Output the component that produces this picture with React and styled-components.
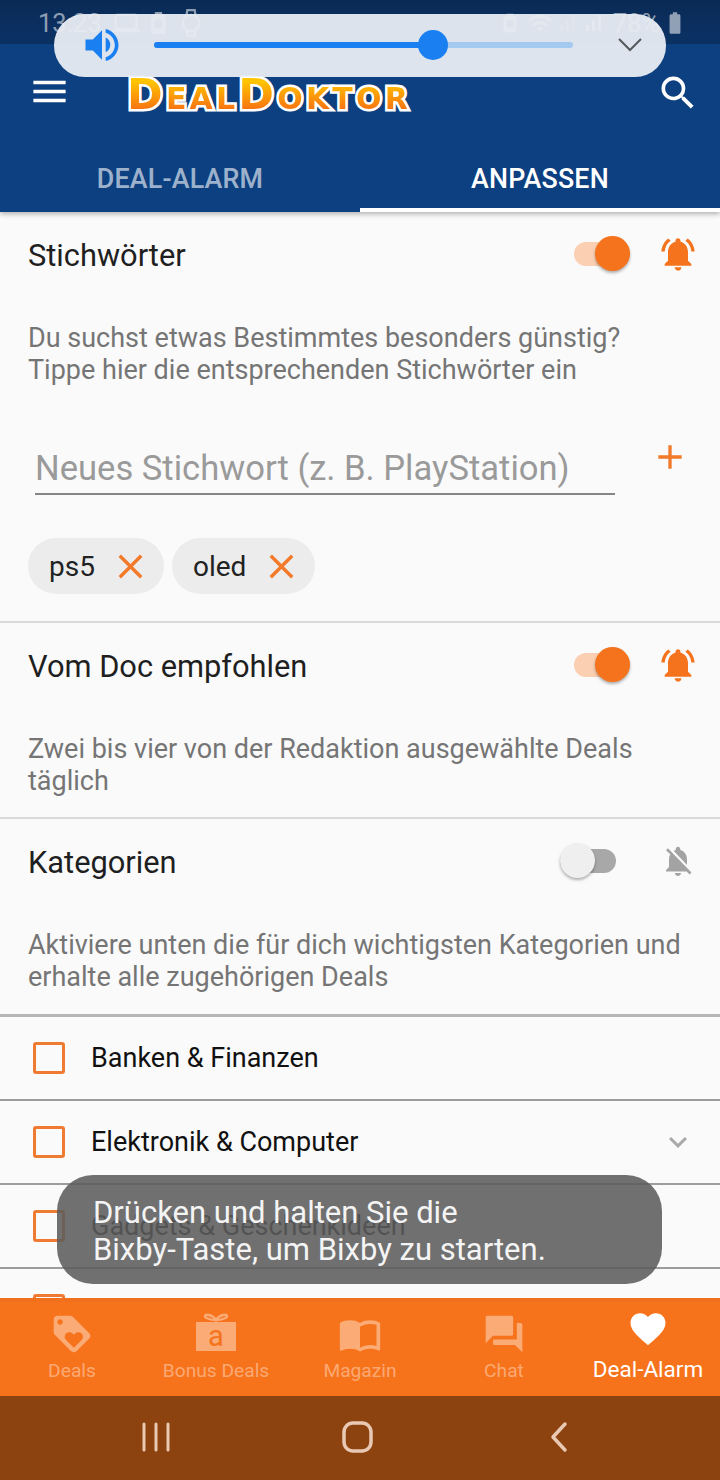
import React from "react";
import styled, { createGlobalStyle } from "styled-components";
import {
  MdMenu, MdSearch, MdAdd, MdClose, MdExpandMore, MdFavorite, MdForum, MdImportContacts,
  MdLoyalty, MdNotificationsActive, MdNotificationsOff, MdVolumeUp, MdLaptop, MdOutlineWatch,
  MdWifi, MdSignalCellularAlt, MdBatteryFull,
} from "react-icons/md";

const Global = createGlobalStyle`
  html, body { margin: 0; padding: 0; background: #fafafa; }
  body { font-family: Roboto, "Noto Sans", sans-serif; }
  * { box-sizing: border-box; }
`;

const Screen = styled.div`
  position: relative; width: 720px; height: 1480px; overflow: hidden;
  display: flex; flex-direction: column; background: #fafafa;
`;

const StatusBar = styled.div`
  height: 44px; flex: none; padding: 9px 32px 0 38px;
  display: flex; align-items: flex-start; justify-content: space-between;
  background: linear-gradient(#0a2a55, #0b3265);
  color: rgba(255,255,255,.55); font-size: 25.5px; line-height: 28px;
`;
const StatusGroup = styled.div`display: flex; align-items: center; gap: ${p => p.$gap}px; svg { flex: none; }`;

const AppBar = styled.header`
  height: 168px; flex: none; background: #0d4080; display: flex; flex-direction: column;
  box-shadow: 0 2px 5px rgba(0,0,0,.3); position: relative; z-index: 1;
`;
const TopRow = styled.div`
  height: 106px; display: flex; align-items: flex-start; padding: 26px 20px 0 28px; color: #fff;
  justify-content: space-between;
`;
const MenuGroup = styled.div`display: flex; align-items: flex-start; gap: 56px;`;
const Logo = styled.div`
  position: relative; margin-top: 1px; font: 700 43px/46px "DejaVu Sans", sans-serif; letter-spacing: 3.2px;
  font-variant: small-caps; white-space: nowrap;
  &::before {
    content: attr(data-label); position: absolute; left: 0; top: 0;
    -webkit-text-stroke: 5px #fff; color: #fff;
  }
  span {
    position: relative; background: linear-gradient(#ffc400 25%, #f76d12 85%);
    -webkit-background-clip: text; background-clip: text; color: transparent;
  }
`;
const SearchSlot = styled.div`display: flex; margin-top: 1px;`;
const Tabs = styled.div`display: grid; grid-template-columns: 1fr 1fr; height: 62px;`;
const Tab = styled.div`
  display: flex; align-items: center; justify-content: center;
  font-size: 26.8px; font-weight: 500; letter-spacing: .2px;
  color: ${p => (p.$active ? "#fff" : "rgba(255,255,255,.62)")};
  border-bottom: 4px solid ${p => (p.$active ? "#fff" : "transparent")};
`;

const Content = styled.main`flex: 1; min-height: 0; overflow: hidden;`;
const Section = styled.section`
  border-bottom: ${p => p.$rule || "2px solid #d9d9d9"}; padding-bottom: ${p => p.$pad}px;
`;
const SectionHead = styled.div`height: 86px; padding: 0 22px 2px 28px; display: flex; align-items: center;`;
const Title = styled.h2`flex: 1; margin: 0; padding-top: 2px; font-size: 30.8px; font-weight: 400; color: #1f1f1f;`;
const Description = styled.p`
  margin: 25px 28px 0; font-size: 27px; line-height: 31.5px; color: #757575;
`;

const Switch = styled.div`
  position: relative; width: 56px; height: 24px; border-radius: 12px;
  margin-right: ${p => (p.$on ? 28 : 42)}px;
  background: ${p => (p.$on ? "#fbcfb1" : "#a8a8a8")};
  &::after {
    content: ""; position: absolute; top: -6px; width: 35px; height: 35px; border-radius: 50%;
    ${p => (p.$on ? "right: 0;" : "left: 0;")}
    background: ${p => (p.$on ? "#f5731c" : "#efefef")};
    box-shadow: 0 2px 3px rgba(0,0,0,.3);
  }
`;
const BellSlot = styled.div`
  width: 40px; height: 40px; display: flex; align-items: center; justify-content: center;
  color: ${p => (p.$on ? "#f5731c" : "#a3a3a3")};
`;

const KeywordRow = styled.div`
  display: flex; align-items: flex-start; padding: 49px 30px 0 35px; justify-content: space-between;
`;
const KeywordInput = styled.div`
  width: 580px; height: 60px; border-bottom: 2px solid #858585; color: #9a9a9a;
  font-size: 34.6px; line-height: 48px; padding-top: 9px; white-space: nowrap;
`;
const AddSlot = styled.div`color: #f27a2a; display: flex; margin-top: 2px;`;
const Chips = styled.div`display: flex; gap: 8px; padding: 43px 28px 0;`;
const Chip = styled.div`
  height: 56px; border-radius: 28px; background: #ececec; display: flex; align-items: center;
  padding: 0 13px 0 21px; gap: 15px; font-size: 28px; color: #222;
  svg { color: #f27a2a; }
`;

const CategoryRow = styled.div`
  height: 84px; display: flex; align-items: center; padding: 0 24px 1px 33px;
  border-bottom: 2px solid #9c9c9c; font-size: 27px; color: #111;
`;
const Box = styled.span`
  width: 32px; height: 32px; flex: none; border: 3px solid #ef7b33; border-radius: 3px; margin-right: 26px;
`;
const Label = styled.span`flex: 1;`;
const Chevron = styled.span`color: #a9a9a9; display: flex;`;

const BottomNav = styled.nav`
  height: 98px; flex: none; background: #f7731b; border-top: 4px solid #f0701c;
  display: grid; grid-template-columns: repeat(5, 1fr); position: relative; z-index: 1;
`;
const NavItem = styled.div`
  display: flex; flex-direction: column; align-items: center;
  color: ${p => (p.$active ? "#fff" : "rgba(255,255,255,.4)")};
  font-size: ${p => (p.$active ? 22.5 : 19.2)}px; line-height: 24px;
`;
const NavIcon = styled.div`
  height: ${p => (p.$active ? 55 : 57)}px; padding: ${p => (p.$active ? "0 0 2px" : "6px 0 0")};
  display: flex; align-items: center; justify-content: center;
`;

const SystemNav = styled.div`
  height: 84px; flex: none; background: #8c4310; display: grid; grid-template-columns: 201px 208px auto;
  align-items: center; padding: 0 0 2px 141px; color: #e9c9b4;
`;

const VolumePanel = styled.div`
  position: absolute; left: 54px; top: 14px; width: 612px; height: 63px; border-radius: 31px;
  background: rgba(233,237,243,.95); z-index: 3; display: flex; align-items: center; padding: 0 26px 2px 26px;
`;
const Speaker = styled.span`color: #1a7ff0; display: flex; flex: none; width: 74px;`;
const Track = styled.div`position: relative; flex: none; width: 419px; height: 6px; border-radius: 3px; background: #a4c9f0;`;
const TrackFill = styled.div`height: 100%; border-radius: 3px; background: #1a7ff0;`;
const Thumb = styled.div`
  position: absolute; top: -12px; width: 30px; height: 30px; border-radius: 50%; background: #1a7ff0;
  transform: translateX(-15px);
`;
const PanelChevron = styled.span`color: #55595e; display: flex; margin-left: 45px;`;

const Toast = styled.div`
  position: absolute; left: 57px; top: 1175px; width: 605px; height: 109px; border-radius: 36px;
  background: rgba(92,92,92,.88); color: #f4f4f4; z-index: 2;
  font-size: 31px; line-height: 37px; padding: 19px 36px;
`;

function Toggle({ on }) {
  const Bell = on ? MdNotificationsActive : MdNotificationsOff;
  return (
    <>
      <Switch $on={on} />
      <BellSlot $on={on}><Bell size={on ? 40 : 36} /></BellSlot>
    </>
  );
}

// Small device-care glyph used twice in the status bar
function DeviceGlyph({ width, height }) {
  return (
    <svg width={width} height={height} viewBox="0 0 18 24" fill="currentColor">
      <path fillRule="evenodd" d="M1 3h4V0h8v3h4v21H1zM9 8a5 5 0 100 10A5 5 0 009 8z" />
    </svg>
  );
}

function GiftIcon() {
  return (
    <svg width="40" height="42" viewBox="0 0 40 42" fill="currentColor">
      <path fill="none" stroke="currentColor" strokeWidth="2.4" d="M20 7C16 1 9 1 9 3s5 4 11 4c6 0 11-2 11-4s-7-2-11 4z" />
      <rect y="9" width="40" height="29" />
      <text x="20" y="33" textAnchor="middle" fontSize="29" fontFamily="Roboto, sans-serif" fill="#f7731b">a</text>
    </svg>
  );
}

const categories = [
  { name: "Banken & Finanzen" },
  { name: "Elektronik & Computer", more: true },
  { name: "Gadgets & Geschenkideen" },
  { name: "" },
];

const navItems = [
  { label: "Deals", icon: <MdLoyalty size={44} /> },
  { label: "Bonus Deals", icon: <GiftIcon /> },
  { label: "Magazin", icon: <MdImportContacts size={44} /> },
  { label: "Chat", icon: <MdForum size={44} /> },
  { label: "Deal-Alarm", icon: <MdFavorite size={42} />, active: true },
];

export default function App() {
  return (
    <Screen>
      <Global />
      <StatusBar>
        <StatusGroup $gap={10}>
          <span>13:23</span>
          <MdLaptop size={28} />
          <DeviceGlyph width={17} height={22} />
          <MdOutlineWatch size={28} />
        </StatusGroup>
        <StatusGroup $gap={2}>
          <DeviceGlyph width={14} height={20} />
          <MdWifi size={26} style={{ marginLeft: 8 }} />
          <MdSignalCellularAlt size={24} style={{ opacity: 0.5 }} />
          <MdSignalCellularAlt size={24} style={{ marginRight: 6 }} />
          <span>78%</span>
          <MdBatteryFull size={26} />
        </StatusGroup>
      </StatusBar>

      <AppBar>
        <TopRow>
          <MenuGroup>
            <MdMenu size={43} />
            <Logo data-label="DealDoktor"><span>DealDoktor</span></Logo>
          </MenuGroup>
          <SearchSlot><MdSearch size={44} /></SearchSlot>
        </TopRow>
        <Tabs>
          <Tab>DEAL-ALARM</Tab>
          <Tab $active>ANPASSEN</Tab>
        </Tabs>
      </AppBar>

      <Content>
        <Section $pad={27}>
          <SectionHead><Title>Stichwörter</Title><Toggle on /></SectionHead>
          <Description>
            Du suchst etwas Bestimmtes besonders günstig?<br />
            Tippe hier die entsprechenden Stichwörter ein
          </Description>
          <KeywordRow>
            <KeywordInput>Neues Stichwort (z. B. PlayStation)</KeywordInput>
            <AddSlot><MdAdd size={40} /></AddSlot>
          </KeywordRow>
          <Chips>
            <Chip>ps5 <MdClose size={41} /></Chip>
            <Chip>oled <MdClose size={41} /></Chip>
          </Chips>
        </Section>

        <Section $pad={20}>
          <SectionHead><Title>Vom Doc empfohlen</Title><Toggle on /></SectionHead>
          <Description>Zwei bis vier von der Redaktion ausgewählte Deals täglich</Description>
        </Section>

        <Section $pad={21} $rule="3px solid #b5b5b5">
          <SectionHead><Title>Kategorien</Title><Toggle /></SectionHead>
          <Description>Aktiviere unten die für dich wichtigsten Kategorien und erhalte alle zugehörigen Deals</Description>
        </Section>

        {categories.map((c, i) => (
          <CategoryRow key={i}>
            <Box />
            <Label>{c.name}</Label>
            {c.more && <Chevron><MdExpandMore size={36} /></Chevron>}
          </CategoryRow>
        ))}
      </Content>

      <BottomNav>
        {navItems.map(n => (
          <NavItem key={n.label} $active={n.active}>
            <NavIcon $active={n.active}>{n.icon}</NavIcon>
            {n.label}
          </NavItem>
        ))}
      </BottomNav>

      <SystemNav>
        <svg width="30" height="30" viewBox="0 0 30 30" stroke="currentColor" strokeWidth="3" strokeLinecap="round">
          <path d="M3 2v26M15 2v26M27 2v26" />
        </svg>
        <svg width="31" height="32" viewBox="0 0 31 32" fill="none" stroke="currentColor" strokeWidth="3.5">
          <rect x="2" y="2" width="27" height="28" rx="9" />
        </svg>
        <svg width="22" height="32" viewBox="0 0 22 32" fill="none" stroke="currentColor" strokeWidth="3.5" strokeLinecap="round" strokeLinejoin="round">
          <path d="M15 3L3 16l12 13" />
        </svg>
      </SystemNav>

      <VolumePanel>
        <Speaker><MdVolumeUp size={44} /></Speaker>
        <Track>
          <TrackFill style={{ width: `${(279 / 419) * 100}%` }} />
          <Thumb style={{ left: `${(279 / 419) * 100}%` }} />
        </Track>
        <PanelChevron>
          <svg width="24" height="14" viewBox="0 0 24 14" fill="none" stroke="currentColor" strokeWidth="2">
            <path d="M1 1l11 11L23 1" />
          </svg>
        </PanelChevron>
      </VolumePanel>

      <Toast>
        Drücken und halten Sie die<br />
        Bixby-Taste, um Bixby zu starten.
      </Toast>
    </Screen>
  );
}
